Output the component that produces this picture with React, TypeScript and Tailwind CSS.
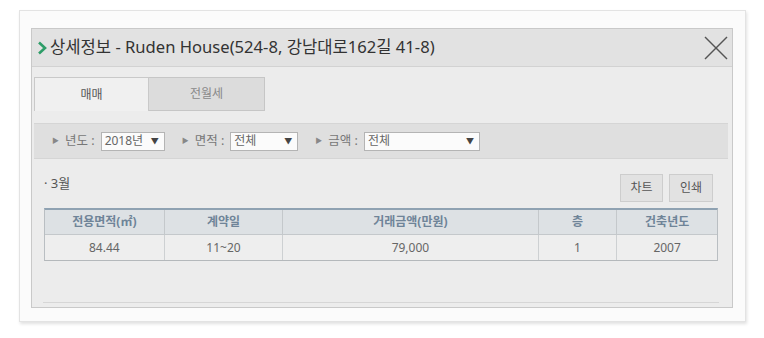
import React from "react";

const font = { fontFamily: '"Noto Sans", "Noto Sans CJK KR", sans-serif' };

function Select({ value, width }: { value: string; width: string }) {
  return (
    <div className={`${width} h-[19px] bg-[#fbfbfb] border border-[#b4b4b4] flex items-center justify-between pl-[3px] pr-[5px] text-[12px] text-[#666]`}>
      <span className="leading-none">{value}</span>
      <span className="text-[8px] leading-none text-[#444]">▼</span>
    </div>
  );
}

function Filter({ label, value, width }: { label: string; width: string; value: string }) {
  return (
    <div className="flex items-center gap-[6px] text-[12.5px] text-[#777]">
      <span className="text-[7px] text-[#888]">▶</span>
      <span>{label} :</span>
      <Select value={value} width={width} />
    </div>
  );
}

export default function App() {
  const cols = ["w-[120px]", "w-[119px]", "w-[256px]", "w-[79px]", "w-[100px]"];
  const heads = ["전용면적(㎡)", "계약일", "거래금액(만원)", "층", "건축년도"];
  const vals = ["84.44", "11~20", "79,000", "1", "2007"];
  return (
    <div className="w-[764px] h-[338px] bg-white pt-[10px] pl-[19px]" style={font}>
      <div className="w-[727px] h-[312px] bg-[#fbfbfb] border border-[#e3e3e3] shadow-[1px_2px_3px_rgba(0,0,0,0.12)] pt-[17px] pl-[11px]">
        <div className="w-[702px] h-[280px] border border-[#c9c9c9] bg-[#ececec] flex flex-col">
          {/* header */}
          <div className="h-[38px] bg-[#e2e2e2] border-b border-[#d2d2d2] flex items-center justify-between pl-[5px] pr-[4px] shrink-0">
            <div className="flex items-center gap-[3px]">
              <svg width="10" height="14" viewBox="0 0 10 14">
                <polyline points="2,1.5 8,7 2,12.5" fill="none" stroke="#2e9d68" strokeWidth="2.6" />
              </svg>
              <span className="text-[16.6px] text-[#333] leading-none">상세정보 - Ruden House(524-8, 강남대로162길 41-8)</span>
            </div>
            <svg width="24" height="24" viewBox="0 0 24 24">
              <line x1="1" y1="1" x2="23" y2="23" stroke="#555" strokeWidth="1.4" />
              <line x1="23" y1="1" x2="1" y2="23" stroke="#555" strokeWidth="1.4" />
            </svg>
          </div>
          {/* body */}
          <div className="flex-1 flex flex-col px-[2px] pt-[10px]">
            <div className="flex h-[34px]">
              <div className="w-[115px] h-[34px] bg-[#f0f0f0] border border-b-0 border-[#c9c9c9] flex items-center justify-center text-[12px] text-[#555]">매매</div>
              <div className="w-[116px] h-[34px] bg-[#dcdcdc] border border-l-0 border-[#c6c6c6] flex items-center justify-center text-[12px] text-[#888]">전월세</div>
            </div>
            <div className="mt-[12px] w-[694px] h-[36px] bg-[#dfdfdf] border-y border-[#d5d5d5] flex items-center pl-[18px] gap-[17px]">
              <Filter label="년도" value="2018년" width="w-[64px]" />
              <Filter label="면적" value="전체" width="w-[68px]" />
              <Filter label="금액" value="전체" width="w-[116px]" />
            </div>
            <div className="px-[10px] flex flex-col">
              <div className="mt-[15px] flex items-start justify-between w-[674px]">
                <span className="text-[13px] text-[#555]">· 3월</span>
                <div className="flex gap-[6px] pr-[5px]">
                  <div className="w-[43px] h-[28px] bg-[#e2e2e2] border border-[#cdcdcd] flex items-center justify-center text-[12px] text-[#555]">차트</div>
                  <div className="w-[44px] h-[28px] bg-[#e2e2e2] border border-[#cdcdcd] flex items-center justify-center text-[12px] text-[#555]">인쇄</div>
                </div>
              </div>
              <div className="mt-[6px] w-[674px] border-t-2 border-[#8fa2b2] border-x border-b border-x-[#b9bec2] border-b-[#b4b8bb]">
                <div className="flex h-[25px] bg-[#dde1e4] border-b border-[#c4c8cb]">
                  {heads.map((h, i) => (
                    <div key={h} className={`${cols[i]} ${i < 4 ? "border-r border-[#c4c8cb]" : ""} flex items-center justify-center text-[12px] font-bold text-[#6f8498]`}>{h}</div>
                  ))}
                </div>
                <div className="flex h-[25px] bg-[#eeeeee]">
                  {vals.map((v, i) => (
                    <div key={i} className={`${cols[i]} ${i < 4 ? "border-r border-[#cdd0d2]" : ""} flex items-center justify-center text-[12px] text-[#666]`}>{v}</div>
                  ))}
                </div>
              </div>
              <div className="mt-[41px] w-[676px] -ml-[1px] border-t border-[#d6d6d6]" />
            </div>
          </div>
        </div>
      </div>
    </div>
  );
}
